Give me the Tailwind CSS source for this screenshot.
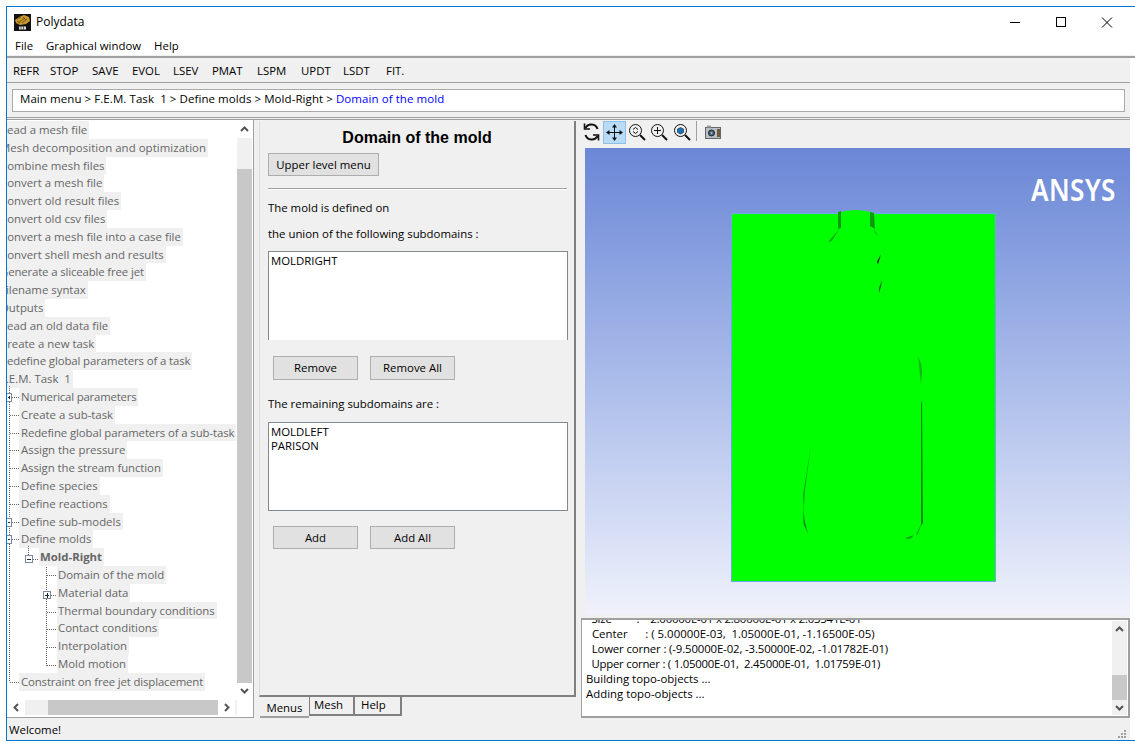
<!DOCTYPE html>
<html>
<head>
<meta charset="utf-8">
<title>Polydata</title>
<script src="https://cdn.jsdelivr.net/npm/@tailwindcss/browser@4"></script>
</head>
<body class="bg-white overflow-hidden font-['Open_Sans',sans-serif] text-[11.4px] text-black">
<div class="mt-[6px] ml-[6px] w-[1129px] h-[735px] border-t border-l border-b border-[#0078d7] bg-white flex flex-col">

    <!-- title bar -->
    <div class="h-[30px] w-[1123px] bg-white flex items-center shrink-0">
        <svg class="ml-[7px] w-[17px] h-[17px]" viewBox="0 0 17 17">
            <rect width="17" height="17" fill="#111"/>
            <path d="M1 6l4-3 5-2 5 2 1 4-4 3-6 1-4-2z" fill="#c8982a"/>
            <path d="M3 5l4-2M5 8l6-4M8 9l5-4M3 7l3 2M9 3l3 3" stroke="#5d430e" stroke-width=".8"/>
            <rect x="5" y="12.500" width="7" height="3" fill="#ddd"/>
            <path d="M7 12.500v3M9.500 12.500v3" stroke="#111" stroke-width=".6"/>
        </svg>
        <span class="ml-[5px] text-[12px]">Polydata</span>
        <div class="ml-auto flex items-center">
            <svg class="w-[46px] h-[20px]" viewBox="0 0 46 20"><path d="M18 10.500h10" stroke="#000"/></svg>
            <svg class="w-[46px] h-[20px]" viewBox="0 0 46 20"><rect x="18.500" y="5.500" width="9" height="9" fill="none" stroke="#000"/></svg>
            <svg class="w-[46px] h-[20px]" viewBox="0 0 46 20"><path d="M18 5.500l10 10M28 5.500l-10 10" stroke="#000"/></svg>
        </div>
    </div>

    <!-- menu bar -->
    <div class="h-[18px] bg-white flex items-center pl-[8px] gap-[13px] shrink-0">
        <span>File</span><span>Graphical window</span><span>Help</span>
    </div>

    <!-- tool bar -->
    <div class="h-[3px] bg-[#f0f0f0] border-b-2 border-[#a0a0a0] shrink-0"></div>
    <div class="w-[1123px] h-[25px] bg-[#f0f0f0] border-b border-[#a0a0a0] flex items-center pl-[6px] pt-[2px] shrink-0">
        <span class="w-[37px]">REFR</span>
        <span class="w-[42px]">STOP</span>
        <span class="w-[40px]">SAVE</span>
        <span class="w-[41px]">EVOL</span>
        <span class="w-[39px]">LSEV</span>
        <span class="w-[45px]">PMAT</span>
        <span class="w-[44px]">LSPM</span>
        <span class="w-[42px]">UPDT</span>
        <span class="w-[43px]">LSDT</span>
        <span>FIT.</span>
    </div>

    <!-- breadcrumb -->
    <div class="w-[1123px] h-[34px] bg-[#f0f0f0] flex items-center pl-[5px] shrink-0">
        <div class="w-[1113px] h-[23px] bg-white border border-[#a9a9a9] flex items-center pl-[7px] pb-[2px] text-[11.5px] tracking-[.07px]">
            <span>Main menu &gt; F.E.M. Task &nbsp;1 &gt; Define molds &gt; Mold-Right &gt;&nbsp;</span><span class="text-[#0000ff]">Domain of the mold</span>
        </div>
    </div>
    <div class="w-[1123px] h-[3px] bg-[#f0f0f0] border-t border-b border-[#a0a0a0] shrink-0"></div>

    <!-- main area -->
    <div class="w-[1123px] bg-[#f0f0f0] flex-1 flex min-h-0">

        <!-- tree panel -->
        <div class="w-[247px] h-[598px] bg-white border-r border-b border-[#a0a0a0] flex flex-col shrink-0">
            <div class="flex flex-1 min-h-0">
                <div class="relative w-[230px] overflow-hidden text-[#666] pt-[1px]">
                    <div class="flex flex-col items-start -ml-[7px] whitespace-nowrap [&>div]:h-[17.8px] [&>div]:leading-[17.8px] [&>div]:bg-[#f0f0f0] [&>div]:pr-[2px]">
                        <div>Read a mesh file</div>
                        <div class="tracking-[.06px]">Mesh decomposition and optimization</div>
                        <div>Combine mesh files</div>
                        <div>Convert a mesh file</div>
                        <div>Convert old result files</div>
                        <div>Convert old csv files</div>
                        <div>Convert a mesh file into a case file</div>
                        <div>Convert shell mesh and results</div>
                        <div class="tracking-[-.14px]">Generate a sliceable free jet</div>
                        <div>Filename syntax</div>
                        <div>Outputs</div>
                        <div>Read an old data file</div>
                        <div>Create a new task</div>
                        <div class="tracking-[-.11px]">Redefine global parameters of a task</div>
                        <div>F.E.M. Task &nbsp;1</div>
                        <div class="ml-[19px] pl-[2px] tracking-[-.2px]">Numerical parameters</div>
                        <div class="ml-[19px] pl-[2px]">Create a sub-task</div>
                        <div class="ml-[19px] pl-[2px] tracking-[-.1px]">Redefine global parameters of a sub-task</div>
                        <div class="ml-[19px] pl-[2px]">Assign the pressure</div>
                        <div class="ml-[19px] pl-[2px] tracking-[-.08px]">Assign the stream function</div>
                        <div class="ml-[19px] pl-[2px]">Define species</div>
                        <div class="ml-[19px] pl-[2px]">Define reactions</div>
                        <div class="ml-[19px] pl-[2px]">Define sub-models</div>
                        <div class="ml-[19px] pl-[2px]">Define molds</div>
                        <div class="ml-[39px] pl-[1px] font-bold">Mold-Right</div>
                        <div class="ml-[57px] pl-[1px]">Domain of the mold</div>
                        <div class="ml-[57px] pl-[1px]">Material data</div>
                        <div class="ml-[57px] pl-[1px]">Thermal boundary conditions</div>
                        <div class="ml-[57px] pl-[1px]">Contact conditions</div>
                        <div class="ml-[57px] pl-[1px]">Interpolation</div>
                        <div class="ml-[57px] pl-[1px]">Mold motion</div>
                        <div class="ml-[19px] pl-[2px] tracking-[-.14px]">Constraint on free jet displacement</div>
                    </div>
                    <!-- tree connectors -->
                    <svg class="absolute left-0 top-0 w-[230px] h-[580px]" viewBox="0 0 230 580">
                        <g stroke="#666" stroke-dasharray="1 1" fill="none">
                            <path d="M2.500 266V562"/>
                            <path d="M3 277.500h9M3 295.500h9M3 313.500h9M3 330.500h9M3 348.500h9M3 366.500h9M3 384.500h9M3 402.500h9M3 419.500h9M3 562.500h9"/>
                            <path d="M21.500 426V435M26 439.500h6"/>
                            <path d="M39.500 447V546M40 455.500h10M44 475.500h6M40 492.500h10M40 509.500h10M40 527.500h10M40 545.500h10"/>
                        </g>
                        <g fill="#fff" stroke="#7a8aa5">
                            <rect x="-1.500" y="273.500" width="6" height="8"/>
                            <rect x="-1.500" y="398.500" width="6" height="8"/>
                            <rect x="-1.500" y="415.500" width="6" height="8"/>
                            <rect x="18.500" y="435.500" width="7" height="7"/>
                            <rect x="36.500" y="471.500" width="7" height="7"/>
                        </g>
                        <path d="M1 277.500h2M2.500 276v3M1 402.500h2M1 419.500h2M20 439.500h4M38 475.500h4M40.500 473v5" stroke="#223" fill="none"/>
                    </svg>
                </div>
                <!-- vertical scrollbar -->
                <div class="w-[15px] my-[1px] bg-[#f0f0f0] flex flex-col items-center">
                    <svg class="w-[15px] h-[17px] shrink-0 bg-white" viewBox="0 0 15 17"><path d="M4 10l3.500-3.500L11 10" fill="none" stroke="#555" stroke-width="2"/></svg>
                    <div class="h-[31px] w-full shrink-0"></div>
                    <div class="flex-1 w-full bg-[#c8c8c8]"></div>
                    <svg class="w-[15px] h-[16px] shrink-0 bg-white" viewBox="0 0 15 16"><path d="M4 6l3.500 3.500L11 6" fill="none" stroke="#555" stroke-width="2"/></svg>
                </div>
            </div>
            <!-- horizontal scrollbar -->
            <div class="h-[15px] mb-[2px] ml-[1px] mr-[16px] flex items-stretch shrink-0 bg-[#f0f0f0]">
                <svg class="w-[17px] shrink-0 bg-white" viewBox="0 0 17 15"><path d="M10 4l-3.500 3.500L10 11" fill="none" stroke="#555" stroke-width="2"/></svg>
                <div class="w-[23px] shrink-0"></div>
                <div class="w-[170px] shrink-0 bg-[#c8c8c8]"></div>
                <svg class="w-[17px] shrink-0 bg-white" viewBox="0 0 17 15"><path d="M7 4l3.500 3.500L7 11" fill="none" stroke="#555" stroke-width="2"/></svg>
            </div>
        </div>

        <!-- menu panel -->
        <div class="w-[322px] ml-[5px] flex flex-col shrink-0">
            <div class="w-[317px] h-[576px] mt-[1px] border-r-2 border-b-2 border-[#808080] border-l border-l-[#ddd] pl-[8px] flex flex-col">
                <div class="text-center font-['Liberation_Sans',sans-serif] font-bold text-[16px] leading-[18px] mt-[8px] w-[298px]">Domain of the mold</div>
                <button class="mt-[6px] w-[111px] h-[23px] bg-[#e1e1e1] border border-[#adadad]">Upper level menu</button>
                <div class="mt-[12px] w-[299px] h-[2px] border-t border-[#a0a0a0] border-b-white border-b"></div>
                <div class="mt-[10px] leading-[16px]">The mold is defined on</div>
                <div class="mt-[10px] leading-[16px]">the union of the following subdomains :</div>
                <div class="mt-[9px] w-[300px] h-[89px] bg-white border-t border-x border-[#828790] px-[2px] leading-[14px] pt-[2px]">MOLDRIGHT</div>
                <div class="mt-[16px] ml-[5px] flex gap-[12px]">
                    <button class="w-[85px] h-[24px] bg-[#e1e1e1] border border-[#adadad]">Remove</button>
                    <button class="w-[85px] h-[24px] bg-[#e1e1e1] border border-[#adadad]">Remove All</button>
                </div>
                <div class="mt-[16px] leading-[16px]">The remaining subdomains are :</div>
                <div class="mt-[10px] w-[300px] h-[89px] bg-white border border-[#828790] px-[2px] leading-[14px] pt-[2px]">MOLDLEFT<br>PARISON</div>
                <div class="mt-[15px] ml-[5px] flex gap-[12px]">
                    <button class="w-[85px] h-[23px] bg-[#e1e1e1] border border-[#adadad]">Add</button>
                    <button class="w-[85px] h-[23px] bg-[#e1e1e1] border border-[#adadad]">Add All</button>
                </div>
            </div>
            <!-- tabs -->
            <div class="flex ml-[1px] items-start">
                <div class="w-[49px] h-[21px] border-b-2 border-[#a0a0a0] flex items-center justify-center pt-[2px]">Menus</div>
                <div class="w-[46px] h-[19px] border-l border-r-2 border-b-2 border-[#808080] flex items-center pl-[4px] pb-[1px]">Mesh</div>
                <div class="w-[47px] h-[19px] border-r-2 border-b-2 border-[#808080] flex items-center pl-[6px] pb-[1px]">Help</div>
            </div>
        </div>

        <!-- graphics panel -->
        <div class="flex-1 min-w-0 flex flex-col">
            <!-- graphics toolbar -->
            <div class="h-[28px] ml-[1px] flex items-start pt-[1px] shrink-0">
                <svg class="w-[23px] h-[22px] ml-[-2px]" viewBox="0 0 23 22" fill="none" stroke="#111" stroke-width="2"><path d="M17.500 8a6.500 6.500 0 0 0-12-1M5.500 14a6.500 6.500 0 0 0 12 1"/><path d="M4.500 2.500v5.500h5.500M18.500 19.500v-5.500h-5.500" stroke-width="1.600"/></svg>
                <div class="w-[23px] h-[23px] bg-[#b9dbf5] border border-[#8cc0ea] flex items-center justify-center">
                    <svg class="w-[17px] h-[17px]" viewBox="0 0 17 17"><path d="M8.500 2v13M2 8.500h13" stroke="#111"/><path d="M8.500 0l2.500 3.500H6zM8.500 17L6 13.500h5zM0 8.500L3.500 6v5zM17 8.500L13.500 11V6z" fill="#111"/></svg>
                </div>
                <svg class="w-[22px] h-[22px]" viewBox="0 0 22 22" fill="none" stroke="#111"><circle cx="9.500" cy="9.500" r="6"/><path d="M14 14l5 5" stroke-width="2"/><path d="M7 8.500l2.500-2 2.500 2M7 10.500l2.500 2 2.500-2" stroke-width="1"/></svg>
                <svg class="w-[22px] h-[22px]" viewBox="0 0 22 22" fill="none" stroke="#111"><circle cx="9.500" cy="9.500" r="6"/><path d="M14 14l5 5" stroke-width="2"/><path d="M9.500 6v7M6 9.500h7" stroke-width="1"/></svg>
                <svg class="w-[22px] h-[22px] ml-[1px]" viewBox="0 0 22 22" fill="none" stroke="#111"><circle cx="9.500" cy="9.500" r="6"/><path d="M14 14l5 5" stroke-width="2"/><path d="M6.500 8l3-1.500 3 1.500v3.500l-3 1.500-3-1.500z" fill="#1c72b8" stroke="#123" stroke-width=".6"/></svg>
                <div class="w-[1px] h-[20px] bg-[#a0a0a0] ml-[3px]"></div>
                <svg class="w-[16px] h-[14px] ml-[8px] mt-[4px]" viewBox="0 0 16 14"><rect x=".5" y="2.500" width="15" height="11" fill="#b7c0c8" stroke="#666"/><rect x="2" y=".5" width="4" height="2" fill="#999"/><circle cx="6.500" cy="8" r="3" fill="#46627c" stroke="#222"/><circle cx="6.500" cy="8" r="1" fill="#9fc4e2"/><rect x="12" y="4" width="3" height="8" fill="#6d5a3d"/></svg>
            </div>
            <!-- viewer -->
            <div class="relative h-[467px] ml-[4px] bg-gradient-to-b from-[#6b87d6] to-[#f0f2fb] shrink-0 overflow-hidden">
                <div class="absolute left-[146px] top-[65px] w-[265px] h-[369px] bg-[#00ff00] border border-[#6fa8e8]"></div>
                <svg class="absolute left-0 top-0 w-[545px] h-[467px]" viewBox="585 148 545 467">
                    <path d="M838 213Q855 207 874 213L875 229Q855 225 838 228z" fill="#00ff00"/>
                    <path d="M838 212l3-1v17l-3 1zM870 212l4 1 1 16-5-3z" fill="#0a9a0a"/>
                    <path d="M839 229l-11 13 4-1zM873 229l6 7-4-3z" fill="#0fb30f"/>
                    <path d="M881 254l-4 8 1 2z" fill="#000"/>
                    <path d="M882 280l-3 8 0 5 2-6z" fill="#086b08"/>
                    <path d="M918 356q4 8 4 16l-1 12 -1-8-1-12z" fill="#12b912"/>
                    <path d="M921 404l1-4 1 123-2 3z" fill="#0a8a0a"/>
                    <path d="M922 522l-6 13 2-1z" fill="#0fa80f"/>
                    <path d="M905 538q5 3 9-3l-3 1z" fill="#0fa80f"/>
                    <path d="M811 445l-6 45 -2 30 1 5-1-30z" fill="#0fa80f"/>
                    <path d="M803 508l1 17 4 9-3-12z" fill="#0a8d0a"/>
                </svg>
                <span class="absolute left-[446px] top-[22px] origin-left scale-x-[.87] font-['Noto_Sans',sans-serif] font-semibold text-[30px] leading-[40px] text-white tracking-[0.5px]">ANSYS</span>
            </div>
            <!-- console -->
            <div class="mt-[3px] h-[100px] bg-white border-t-2 border-l border-r-2 border-b-2 border-[#a0a0a0] flex overflow-hidden">
                <div class="flex-1 min-w-0 pl-[4px] leading-[15px] -mt-[9px] [&>div]:whitespace-pre">
                    <div class="tracking-[-.2px]">  Size         :    2.00000E-01 x 2.80000E-01 x 2.03541E-01</div>
                    <div>  Center      : ( 5.00000E-03,  1.05000E-01, -1.16500E-05)</div>
                    <div class="tracking-[-.14px]">  Lower corner : (-9.50000E-02, -3.50000E-02, -1.01782E-01)</div>
                    <div class="tracking-[-.25px]">  Upper corner : ( 1.05000E-01,  2.45000E-01,  1.01759E-01)</div>
                    <div>Building topo-objects ...</div>
                    <div>Adding topo-objects ...</div>
                </div>
                <div class="w-[15px] mr-[1px] my-[1px] bg-[#f0f0f0] flex flex-col shrink-0">
                    <svg class="w-[15px] h-[17px] shrink-0" viewBox="0 0 15 17"><path d="M4 10l3.500-3.500L11 10" fill="none" stroke="#555" stroke-width="2"/></svg>
                    <div class="h-[37px] shrink-0"></div>
                    <div class="h-[25px] shrink-0 bg-[#c8c8c8]"></div>
                    <svg class="w-[15px] h-[17px] shrink-0 mt-auto" viewBox="0 0 15 17"><path d="M4 6l3.500 3.500L11 6" fill="none" stroke="#555" stroke-width="2"/></svg>
                </div>
            </div>
        </div>
    </div>

    <!-- status bar -->
    <div class="w-[1123px] h-[22px] bg-[#f0f0f0] flex items-center pl-[2px] pt-[1px] shrink-0">
        <span>Welcome!</span>
        <svg class="ml-auto mr-[3px] mt-[8px] w-[10px] h-[10px]" viewBox="0 0 10 10" fill="#a0a0a0"><rect x="7" y="1" width="2" height="2"/><rect x="7" y="4" width="2" height="2"/><rect x="4" y="4" width="2" height="2"/><rect x="7" y="7" width="2" height="2"/><rect x="4" y="7" width="2" height="2"/><rect x="1" y="7" width="2" height="2"/></svg>
    </div>
</div>
</body>
</html>
